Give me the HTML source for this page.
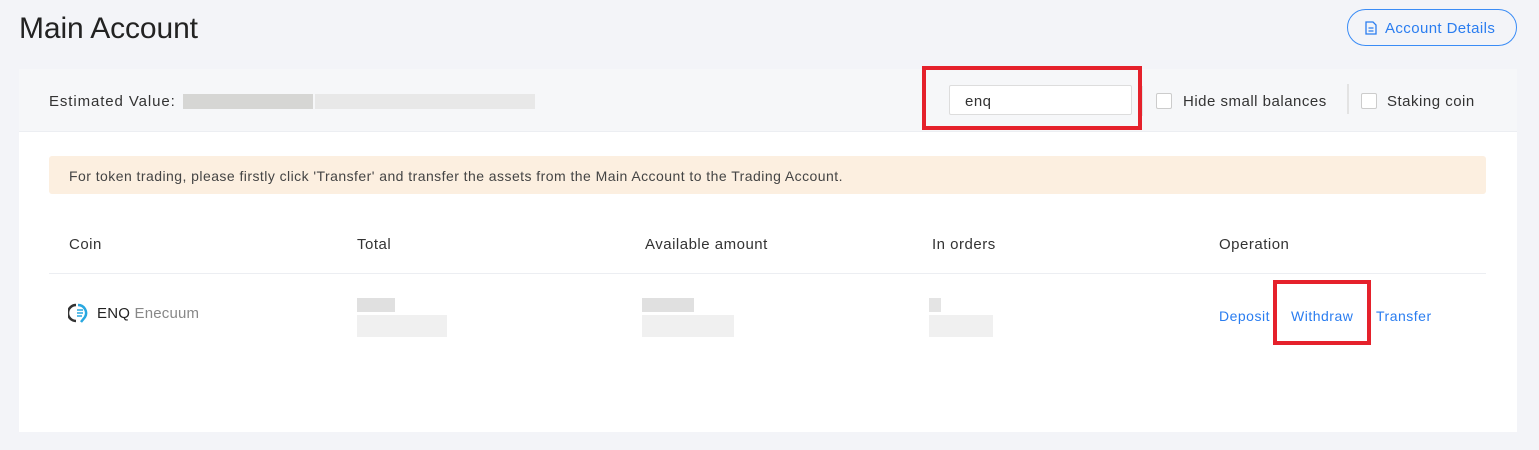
<!DOCTYPE html>
<html><head><meta charset="utf-8"><style>
*{box-sizing:border-box;margin:0;padding:0}
body{width:1539px;height:450px;background:#f3f4f8;font-family:"Liberation Sans",sans-serif;position:relative;overflow:hidden;color:#333}
.abs{position:absolute}
h1{position:absolute;left:19px;top:12px;font-size:30px;font-weight:normal;color:#222;letter-spacing:-0.1px}
.btn{position:absolute;left:1347px;top:9px;width:170px;height:37px;border:1px solid #3a8cf6;border-radius:19px;color:#2a7df0;font-size:15px;letter-spacing:0.4px;line-height:37px;padding-left:37px}
.card{position:absolute;left:19px;top:69px;width:1498px;height:363px;background:#fff}
.head{position:absolute;left:0;top:0;width:1498px;height:63px;background:#f6f7f9;border-bottom:1px solid #eceef2}
.t{position:absolute;font-size:15px;letter-spacing:0.5px;white-space:nowrap}
.blur{position:absolute;background:#dedede}
.cb{position:absolute;width:16px;height:16px;border:1px solid #ccc;background:#fff;border-radius:2px}
.red{position:absolute;border:4px solid #e5212b}
a{color:#2a7df0;text-decoration:none}
</style></head><body>
<h1>Main Account</h1>
<div class="btn"><svg class="abs" style="left:17px;top:11px" width="12" height="14" viewBox="0 0 12 14"><path d="M1 1h7l3 3v9H1z" fill="none" stroke="#2a7df0" stroke-width="1.3"/><path d="M3.5 7h5M3.5 10h5" stroke="#2a7df0" stroke-width="1.2"/></svg>Account Details</div>
<div class="card">
<div class="head">
<div class="t" style="left:30px;top:24px;color:#333;letter-spacing:0.9px">Estimated Value:</div>
<div class="blur" style="left:164px;top:25px;width:130px;height:15px;background:#d6d6d4"></div>
<div class="blur" style="left:296px;top:25px;width:220px;height:15px;background:#e8e8e8"></div>
<div class="abs" style="left:930px;top:16px;width:183px;height:30px;background:#fff;border:1px solid #ddd;border-radius:2px"></div>
<div class="t" style="left:946px;top:24px">enq</div>
<div class="abs" style="left:1122px;top:17px;width:2px;height:30px;background:#e3e3e3"></div>
<div class="cb" style="left:1137px;top:24px"></div>
<div class="t" style="left:1164px;top:24px">Hide small balances</div>
<div class="abs" style="left:1328px;top:15px;width:2px;height:30px;background:#e3e3e3"></div>
<div class="cb" style="left:1342px;top:24px"></div>
<div class="t" style="left:1368px;top:24px">Staking coin</div>
</div>
<div class="abs" style="left:30px;top:87px;width:1437px;height:38px;background:#fcefe0;border-radius:3px"></div>
<div class="t" style="left:50px;top:99px;font-size:14px;color:#444;letter-spacing:0.45px">For token trading, please firstly click 'Transfer' and transfer the assets from the Main Account to the Trading Account.</div>
<div class="t" style="left:50px;top:167px">Coin</div>
<div class="t" style="left:338px;top:167px">Total</div>
<div class="t" style="left:626px;top:167px">Available amount</div>
<div class="t" style="left:913px;top:167px">In orders</div>
<div class="t" style="left:1200px;top:167px">Operation</div>
<div class="abs" style="left:30px;top:204px;width:1437px;height:1px;background:#eceef2"></div>
<svg class="abs" style="left:49px;top:233px" width="22" height="22" viewBox="0 0 22 22"><path d="M8 3A8 8 0 0 0 8 19" fill="none" stroke="#333" stroke-width="2.5"/><path d="M10 3a8 8 0 0 1 7 12l-4 5" fill="none" stroke="#29a8e0" stroke-width="2.5"/><path d="M9 8h6M9 11h6M9 14h5" stroke="#29a8e0" stroke-width="1.6"/></svg>
<div class="t" style="left:78px;top:236px;color:#222;letter-spacing:0.2px">ENQ <span style="color:#888">Enecuum</span></div>
<div class="blur" style="left:338px;top:229px;width:38px;height:14px;background:#e0e0e0"></div>
<div class="blur" style="left:338px;top:246px;width:90px;height:22px;background:#f0f0f0"></div>
<div class="blur" style="left:623px;top:229px;width:52px;height:14px;background:#e0e0e0"></div>
<div class="blur" style="left:623px;top:246px;width:92px;height:22px;background:#f0f0f0"></div>
<div class="blur" style="left:910px;top:229px;width:12px;height:14px;background:#e4e4e4"></div>
<div class="blur" style="left:910px;top:246px;width:64px;height:22px;background:#f0f0f0"></div>
<div class="t" style="left:1200px;top:239px;font-size:14px"><a>Deposit</a></div>
<div class="t" style="left:1272px;top:239px;font-size:14px"><a>Withdraw</a></div>
<div class="t" style="left:1357px;top:239px;font-size:14px"><a>Transfer</a></div>
</div>
<div class="red" style="left:922px;top:66px;width:220px;height:64px"></div>
<div class="red" style="left:1273px;top:280px;width:98px;height:65px"></div>
</body></html>
